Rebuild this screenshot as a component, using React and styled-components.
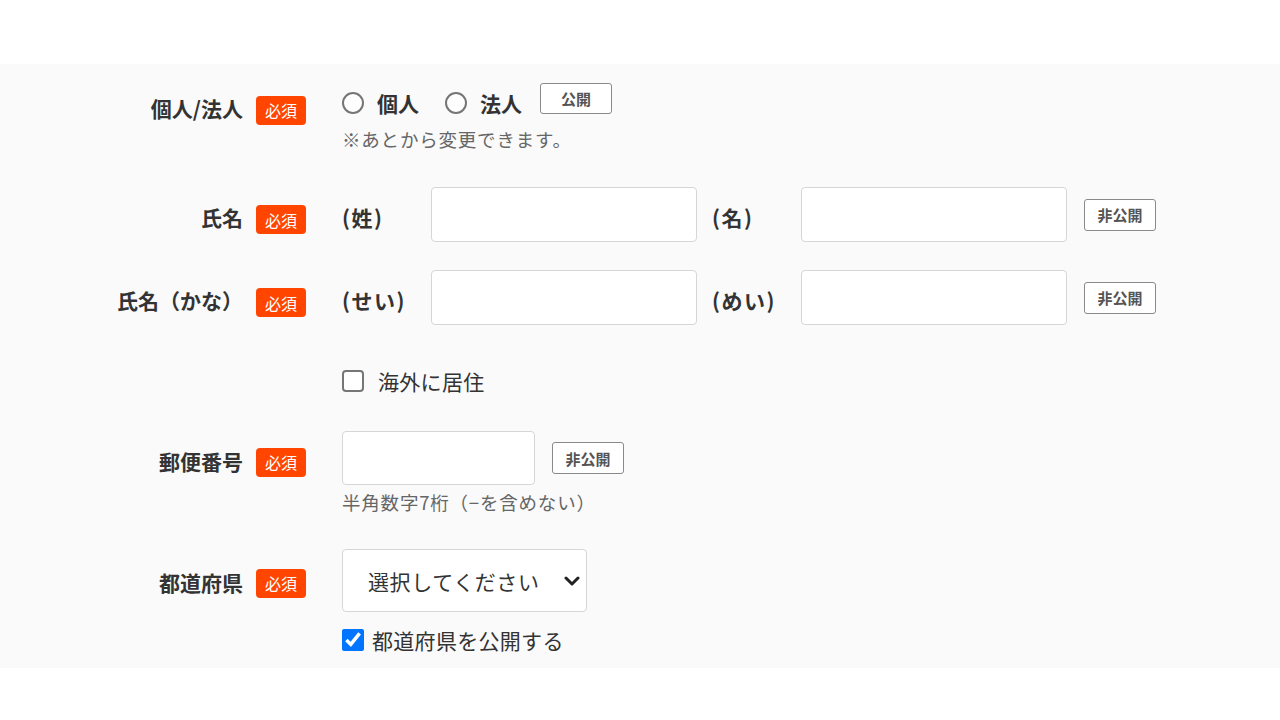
import React from "react";
import styled, { createGlobalStyle, css } from "styled-components";

const GlobalStyle = createGlobalStyle`
  html, body { margin: 0; padding: 0; background: #ffffff; }
  body {
    font-family: "Noto Sans CJK JP", "Noto Sans", sans-serif;
    color: #333333;
  }
  * { box-sizing: border-box; }
`;

const Section = styled.section`
  margin-top: 64px;
  height: 604px;
  background: #fafafa;
  padding-top: 19px;
`;

const Form = styled.div`
  display: flex;
  flex-direction: column;
`;

const Row = styled.div`
  display: grid;
  grid-template-columns: 306px 1fr;
  column-gap: 36px;
  align-items: start;
  margin-top: ${(p) => p.$mt || 0}px;
`;

const LabelCell = styled.div`
  display: flex;
  justify-content: flex-end;
  align-items: center;
  gap: 13px;
  height: ${(p) => p.$h}px;
  padding-top: ${(p) => p.$dy}px;
`;

const LabelText = styled.span`
  position: relative;
  top: ${(p) => p.$nudge || 0}px;
  font-size: 21px;
  font-weight: 700;
  color: #333;
  line-height: 1;
  white-space: nowrap;
`;

const Badge = styled.span`
  display: inline-flex;
  align-items: center;
  justify-content: center;
  width: 50px;
  height: 29px;
  border-radius: 4px;
  background: #ff4500;
  color: #fff;
  font-size: 16px;
  line-height: 1;
`;

const Content = styled.div`
  display: flex;
  flex-direction: column;
  align-items: flex-start;
`;

const Line = styled.div`
  display: flex;
  align-items: center;
  height: ${(p) => p.$h}px;
  margin-top: ${(p) => p.$mt || 0}px;
`;

const RadioLabel = styled.label`
  display: flex;
  align-items: center;
  gap: 13px;
  margin-right: ${(p) => p.$mr || 0}px;
  font-size: 21px;
  font-weight: 700;
  line-height: 1;
  color: #333;
`;

const Radio = styled.input.attrs({ type: "radio" })`
  appearance: none;
  -webkit-appearance: none;
  width: 22px;
  height: 22px;
  margin: 0;
  border: 2px solid #767676;
  border-radius: 50%;
  background: #fff;
`;

const PublicButton = styled.button`
  display: inline-flex;
  align-items: center;
  justify-content: center;
  width: 72px;
  height: ${(p) => p.$h || 32}px;
  margin-left: ${(p) => p.$ml || 0}px;
  align-self: ${(p) => p.$self || "center"};
  padding: 0;
  background: #fff;
  border: 1.5px solid #8a8a8a;
  border-radius: 3px;
  font-family: inherit;
  font-size: 15px;
  font-weight: 700;
  color: #555;
  line-height: 1;
`;

const Note = styled.p`
  margin: ${(p) => p.$mt || 0}px 0 0;
  font-size: 18.5px;
  letter-spacing: 0.8px;
  line-height: 24px;
  color: #666;
`;

const NameLine = styled.div`
  display: flex;
  align-items: center;
  gap: 15px;
  height: 55px;
`;

const Prefix = styled.span`
  width: 74px;
  padding-top: 5px;
  font-size: 21px;
  font-weight: 700;
  letter-spacing: 1.5px;
  line-height: 1;
  color: #333;
  white-space: nowrap;
`;

const TextInput = styled.input.attrs({ type: "text" })`
  width: ${(p) => p.$w}px;
  height: ${(p) => p.$h}px;
  margin: 0;
  padding: 0 12px;
  background: #fff;
  border: 1.5px solid #d6d6d6;
  border-radius: 4px;
  font-family: inherit;
  font-size: 20px;
  outline: none;
`;

const CheckLabel = styled.label`
  display: flex;
  align-items: center;
  gap: ${(p) => p.$gap}px;
  font-size: 21px;
  letter-spacing: 0.3px;
  line-height: 1;
  color: #333;
`;

const Checkbox = styled.input.attrs({ type: "checkbox" })`
  width: 22px;
  height: 22px;
  margin: 0;
  accent-color: #0075ff;
  ${(p) =>
    p.$plain &&
    css`
      appearance: none;
      -webkit-appearance: none;
      border: 2px solid #767676;
      border-radius: 4px;
      background: #fff;
    `}
`;

const SelectWrap = styled.div`
  position: relative;
  width: 245px;
  height: 63px;
`;

const Select = styled.select`
  appearance: none;
  -webkit-appearance: none;
  width: 100%;
  height: 100%;
  margin: 0;
  padding: 0 0 0 25px;
  background: #fff;
  border: 1.5px solid #d6d6d6;
  border-radius: 4px;
  font-family: inherit;
  font-size: 21px;
  letter-spacing: 0.6px;
  color: #333;
  outline: none;
`;

const Chevron = styled.svg`
  position: absolute;
  right: 7px;
  top: 50%;
  transform: translateY(-50%);
  pointer-events: none;
`;

export default function App() {
  return (
    <>
      <GlobalStyle />
      <Section>
        <Form>
          <Row>
            <LabelCell $h={40} $dy={14}>
              <LabelText $nudge={-2}>個人/法人</LabelText>
              <Badge>必須</Badge>
            </LabelCell>
            <Content>
              <Line $h={40}>
                <RadioLabel $mr={26}>
                  <Radio name="kind" />
                  個人
                </RadioLabel>
                <RadioLabel $mr={18}>
                  <Radio name="kind" />
                  法人
                </RadioLabel>
                <PublicButton $h={31} $self="flex-start">公開</PublicButton>
              </Line>
              <Note $mt={4}>※あとから変更できます。</Note>
            </Content>
          </Row>

          <Row $mt={36}>
            <LabelCell $h={55} $dy={10}>
              <LabelText $nudge={-2}>氏名</LabelText>
              <Badge>必須</Badge>
            </LabelCell>
            <NameLine>
              <Prefix>(姓)</Prefix>
              <TextInput $w={266} $h={55} />
              <Prefix>(名)</Prefix>
              <TextInput $w={266} $h={55} />
              <PublicButton $ml={2} $h={32}>非公開</PublicButton>
            </NameLine>
          </Row>

          <Row $mt={28}>
            <LabelCell $h={55} $dy={10}>
              <LabelText $nudge={-2}>氏名（かな）</LabelText>
              <Badge>必須</Badge>
            </LabelCell>
            <NameLine>
              <Prefix>(せい)</Prefix>
              <TextInput $w={266} $h={55} />
              <Prefix>(めい)</Prefix>
              <TextInput $w={266} $h={55} />
              <PublicButton $ml={2} $h={32}>非公開</PublicButton>
            </NameLine>
          </Row>

          <Row $mt={41}>
            <div />
            <Line $h={30}>
              <CheckLabel $gap={14}>
                <Checkbox $plain />
                海外に居住
              </CheckLabel>
            </Line>
          </Row>

          <Row $mt={35}>
            <LabelCell $h={54} $dy={8}>
              <LabelText $nudge={-1}>郵便番号</LabelText>
              <Badge>必須</Badge>
            </LabelCell>
            <Content>
              <Line $h={54}>
                <TextInput $w={193} $h={54} />
                <PublicButton $ml={17} $h={32}>非公開</PublicButton>
              </Line>
              <Note $mt={5}>半角数字7桁（−を含めない）</Note>
            </Content>
          </Row>

          <Row $mt={35}>
            <LabelCell $h={63} $dy={5}>
              <LabelText $nudge={-1}>都道府県</LabelText>
              <Badge>必須</Badge>
            </LabelCell>
            <Content>
              <SelectWrap>
                <Select defaultValue="">
                  <option value="">選択してください</option>
                </Select>
                <Chevron width="16" height="11" viewBox="0 0 16 11">
                  <polyline
                    points="2,2.5 8,8.5 14,2.5"
                    fill="none"
                    stroke="#222"
                    strokeWidth="3"
                    strokeLinecap="round"
                    strokeLinejoin="round"
                  />
                </Chevron>
              </SelectWrap>
              <Line $h={30} $mt={13}>
                <CheckLabel $gap={8}>
                  <Checkbox defaultChecked />
                  都道府県を公開する
                </CheckLabel>
              </Line>
            </Content>
          </Row>
        </Form>
      </Section>
    </>
  );
}
